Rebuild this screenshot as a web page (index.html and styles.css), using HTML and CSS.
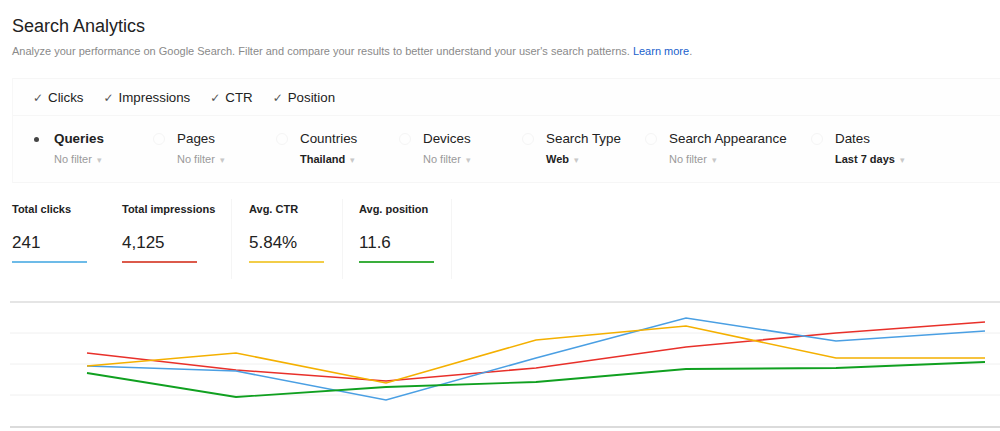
FILE: index.html
```html
<!DOCTYPE html>
<html>
<head>
<meta charset="utf-8">
<link rel="stylesheet" href="styles.css">
</head>
<body>
<div class="page">
  <h1 class="title">Search Analytics</h1>
  <p class="subtitle">Analyze your performance on Google Search. Filter and compare your results to better understand your user's search patterns. <a class="link">Learn more</a>.</p>

  <div class="panel">
    <div class="metrics-row">
      <span class="check">Clicks</span>
      <span class="check">Impressions</span>
      <span class="check">CTR</span>
      <span class="check">Position</span>
    </div>
    <div class="filters">
      <div class="filter">
        <span class="radio radio-on"></span>
        <div class="filter-body"><div class="flabel flabel-on">Queries</div><div class="fval">No filter <span class="caret">▾</span></div></div>
      </div>
      <div class="filter">
        <span class="radio"></span>
        <div class="filter-body"><div class="flabel">Pages</div><div class="fval">No filter <span class="caret">▾</span></div></div>
      </div>
      <div class="filter">
        <span class="radio"></span>
        <div class="filter-body"><div class="flabel">Countries</div><div class="fval fval-set">Thailand <span class="caret">▾</span></div></div>
      </div>
      <div class="filter">
        <span class="radio"></span>
        <div class="filter-body"><div class="flabel">Devices</div><div class="fval">No filter <span class="caret">▾</span></div></div>
      </div>
      <div class="filter">
        <span class="radio"></span>
        <div class="filter-body"><div class="flabel">Search Type</div><div class="fval fval-set">Web <span class="caret">▾</span></div></div>
      </div>
      <div class="filter filter-wide">
        <span class="radio"></span>
        <div class="filter-body"><div class="flabel">Search Appearance</div><div class="fval">No filter <span class="caret">▾</span></div></div>
      </div>
      <div class="filter">
        <span class="radio"></span>
        <div class="filter-body"><div class="flabel">Dates</div><div class="fval fval-set">Last 7 days <span class="caret">▾</span></div></div>
      </div>
    </div>
  </div>

  <div class="cards">
    <div class="card"><div class="card-label">Total clicks</div><div class="card-value">241</div><div class="bar bar-blue"></div></div>
    <div class="card"><div class="card-label">Total impressions</div><div class="card-value">4,125</div><div class="bar bar-red"></div></div>
    <div class="card card-pad"><div class="card-label">Avg. CTR</div><div class="card-value">5.84%</div><div class="bar bar-yellow"></div></div>
    <div class="card card-pad2"><div class="card-label">Avg. position</div><div class="card-value">11.6</div><div class="bar bar-green"></div></div>
  </div>

  <svg class="chart" width="1000" height="136" viewBox="0 295 1000 136">
    <line x1="10" y1="302" x2="1000" y2="302" stroke="#dcdcdc" stroke-width="1.3"/>
    <line x1="10" y1="333" x2="1000" y2="333" stroke="#f0f0f0" stroke-width="1"/>
    <line x1="10" y1="364" x2="1000" y2="364" stroke="#f0f0f0" stroke-width="1"/>
    <line x1="10" y1="395" x2="1000" y2="395" stroke="#f0f0f0" stroke-width="1"/>
    <line x1="10" y1="427" x2="1000" y2="427" stroke="#cfcfcf" stroke-width="1.3"/>
    <polyline fill="none" stroke="#e8302a" stroke-width="1.6" points="87,353 236,370 386,381 536,368 686,347 836,333 985,322"/>
    <polyline fill="none" stroke="#4a9fe3" stroke-width="1.6" points="87,366 236,371 386,400 536,358 686,318 836,341 985,331"/>
    <polyline fill="none" stroke="#f4b000" stroke-width="1.6" points="87,366 236,353 386,383 536,340 686,326 836,358 985,358"/>
    <polyline fill="none" stroke="#10a020" stroke-width="1.8" points="87,373 236,397 386,387 536,382 686,369 836,368 985,362"/>
  </svg>
</div>
</body>
</html>
```

FILE: styles.css
```css
* { box-sizing: border-box; }
html, body { margin: 0; padding: 0; background: #fff; }
body { font-family: "Liberation Sans", Arial, sans-serif; color: #222; width: 1000px; height: 431px; overflow: hidden; }

.page { padding-top: 15px; }

.title {
  margin: 0 0 0 12px;
  font-size: 18px;
  font-weight: normal;
  line-height: 22px;
  color: #222;
}
.subtitle {
  margin: 7px 0 0 12px;
  font-size: 11px;
  line-height: 14px;
  color: #8a8a8a;
}
.link { color: #1a5fcc; }

.panel {
  margin: 20px 0 0 12px;
  border-top: 1px solid #f6f6f6;
  border-left: 1px solid #f7f7f7;
  border-bottom: 1px solid #f6f6f6;
  background: #fefefe;
}
.metrics-row {
  display: flex;
  align-items: center;
  height: 37px;
  padding-left: 20px;
  border-bottom: 1px solid #f6f6f6;
  font-size: 13.3px;
  color: #222;
}
.check { margin-right: 20px; }
.check::before {
  content: "✓";
  font-family: "DejaVu Sans", sans-serif;
  font-size: 12px;
  color: #555;
  margin-right: 5px;
}

.filters {
  display: flex;
  padding: 14px 0 0 17px;
  height: 66px;
}
.filter { display: flex; width: 123px; }
.filter-wide { width: 166px; }
.radio {
  width: 12px;
  height: 12px;
  margin: 3px 12px 0 0;
  border-radius: 50%;
  border: 1px solid #f5f5f5;
  flex: none;
  position: relative;
}
.radio-on { border-color: transparent; }
.radio-on::after {
  content: "";
  position: absolute;
  left: 3px;
  top: 3px;
  width: 5px;
  height: 5px;
  border-radius: 50%;
  background: #444;
}
.flabel { font-size: 13.4px; line-height: 18px; color: #222; white-space: nowrap; }
.flabel-on { font-weight: bold; }
.fval { margin-top: 4px; font-size: 11px; line-height: 14px; color: #9a9a9a; white-space: nowrap; }
.fval-set { color: #222; font-weight: bold; }
.caret { font-size: 9px; color: #c8c8c8; font-weight: normal; margin-left: 2px; }

.cards {
  display: grid;
  grid-template-columns: 110px 122px 111px 109px;
  margin-top: 16px;
  height: 80px;
}
.card {
  padding: 3px 0 0 12px;
  border-right: 1px solid #f5f5f5;
}
.card:first-child { border-right-color: transparent; }
.card-pad { padding-left: 17px; }
.card-pad2 { padding-left: 16px; }
.card-label { font-size: 11px; font-weight: bold; line-height: 14px; color: #222; white-space: nowrap; }
.card-value { margin-top: 17px; font-size: 17px; line-height: 20px; color: #222; }
.bar { margin-top: 8px; width: 75px; height: 2px; }
.bar-blue { background: #6dbbe8; }
.bar-red { background: #dc5a4b; }
.bar-yellow { background: #f2cd48; }
.bar-green { background: #3aae3c; }

.chart { display: block; margin-top: 16px; }
```
